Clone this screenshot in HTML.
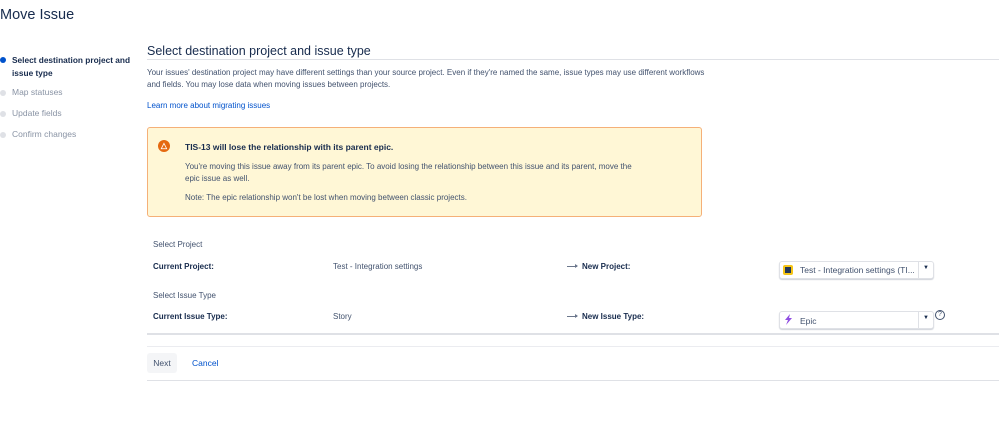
<!DOCTYPE html>
<html><head><style>
*{margin:0;padding:0;box-sizing:border-box}
body{width:999px;height:423px;background:#fff;font-family:"Liberation Sans",sans-serif;color:#172b4d;position:relative;overflow:hidden;font-size:9px}
.a{position:absolute;white-space:nowrap}
.b{font-weight:bold}
.g{color:#8993a4}
.dot{position:absolute;width:6px;height:6px;border-radius:50%;background:#dfe1e6;left:0}
.sel{position:absolute;height:18px;border:1px solid #dfe1e6;border-radius:3px;background:#fff;box-shadow:0 1px 1px rgba(9,30,66,.2)}
.arr{position:absolute;width:10px;height:1px;background:#6b778c}
.arr:after{content:"";position:absolute;right:-1px;top:-2px;border-left:3px solid #6b778c;border-top:2.5px solid transparent;border-bottom:2.5px solid transparent}
</style></head><body>
<div class="a" style="left:0;top:7px;font-size:14.5px">Move Issue</div>

<div class="dot" style="top:57px;background:#0052cc"></div>
<div class="a b" style="left:12px;top:54px;line-height:13px;font-size:8.3px">Select destination project and<br>issue type</div>
<div class="dot" style="top:90px"></div><div class="a g" style="left:12px;top:87px;font-size:8.5px">Map statuses</div>
<div class="dot" style="top:111px"></div><div class="a g" style="left:12px;top:108px;font-size:8.5px">Update fields</div>
<div class="dot" style="top:132px"></div><div class="a g" style="left:12px;top:129px;font-size:8.5px">Confirm changes</div>

<div class="a" style="left:147px;top:44px;font-size:12.5px">Select destination project and issue type</div>
<div class="a" style="left:147px;top:59px;width:852px;height:1px;background:#dfe1e6"></div>
<div class="a" style="left:147px;top:67px;font-size:8px;line-height:12px;color:#42526e">Your issues' destination project may have different settings than your source project. Even if they're named the same, issue types may use different workflows<br>and fields. You may lose data when moving issues between projects.</div>
<div class="a" style="left:147px;top:101px;font-size:8px;color:#0052cc">Learn more about migrating issues</div>

<div class="a" style="left:147px;top:127px;width:555px;height:90px;background:#fff7d6;border:1px solid #f5b078;border-radius:3px"></div>
<div class="a" style="left:158px;top:140px;width:12px;height:12px;border-radius:50%;background:#e56910;color:#fff;font-size:8px;text-align:center;line-height:12px;font-weight:bold">△</div>
<div class="a b" style="left:185px;top:142px;font-size:8.5px">TIS-13 will lose the relationship with its parent epic.</div>
<div class="a" style="left:185px;top:161px;font-size:8px;line-height:12px;color:#42526e">You're moving this issue away from its parent epic. To avoid losing the relationship between this issue and its parent, move the<br>epic issue as well.</div>
<div class="a" style="left:185px;top:193px;font-size:8px;color:#42526e">Note: The epic relationship won't be lost when moving between classic projects.</div>

<div class="a" style="left:153px;top:240px;font-size:8px;color:#42526e">Select Project</div>
<div class="a b" style="left:153px;top:262px;font-size:8px">Current Project:</div>
<div class="a" style="left:333px;top:262px;font-size:8px;color:#42526e">Test - Integration settings</div>
<div class="arr" style="left:567px;top:266px"></div>
<div class="a b" style="left:582px;top:262px;font-size:8px">New Project:</div>
<div class="sel" style="left:779px;top:261px;width:155px"></div>
<div class="a" style="left:783px;top:265px;width:10px;height:10px;background:#f5c518;border-radius:2px"><div style="margin:2px;width:6px;height:6px;background:#253858"></div></div>
<div class="a" style="left:800px;top:265px;font-size:8.5px;color:#42526e">Test - Integration settings (TI...</div>
<div class="a" style="left:918px;top:262px;width:1px;height:16px;background:#dfe1e6"></div>
<div class="a" style="left:923px;top:265px;font-size:6px">▼</div>

<div class="a" style="left:153px;top:291px;font-size:8px;color:#42526e">Select Issue Type</div>
<div class="a b" style="left:153px;top:312px;font-size:8px">Current Issue Type:</div>
<div class="a" style="left:333px;top:312px;font-size:8px;color:#42526e">Story</div>
<div class="arr" style="left:567px;top:316px"></div>
<div class="a b" style="left:582px;top:312px;font-size:8px">New Issue Type:</div>
<div class="sel" style="left:779px;top:311px;width:155px"></div>
<svg class="a" style="left:784px;top:314px" width="9" height="11" viewBox="0 0 9 11"><path d="M6 0L1 6h3L2 11l6-7H5z" fill="#904ee2"/></svg>
<div class="a" style="left:800px;top:316px;font-size:8.5px;color:#42526e">Epic</div>
<div class="a" style="left:918px;top:312px;width:1px;height:16px;background:#dfe1e6"></div>
<div class="a" style="left:923px;top:315px;font-size:6px">▼</div>
<div class="a" style="left:935px;top:310px;width:10px;height:10px;border:1px solid #42526e;border-radius:50%;font-size:7px;text-align:center;line-height:8px;color:#42526e">?</div>

<div class="a" style="left:147px;top:333px;width:852px;height:2px;background:#dfe1e6"></div>
<div class="a" style="left:147px;top:346px;width:852px;height:1px;background:#ebecf0"></div>
<div class="a" style="left:147px;top:353px;width:30px;height:20px;background:#f4f5f7;border-radius:3px;font-size:8.5px;text-align:center;line-height:20px;color:#42526e">Next</div>
<div class="a" style="left:192px;top:358px;font-size:8.5px;color:#0052cc">Cancel</div>
<div class="a" style="left:147px;top:380px;width:852px;height:1px;background:#dfe1e6"></div>
</body></html>
